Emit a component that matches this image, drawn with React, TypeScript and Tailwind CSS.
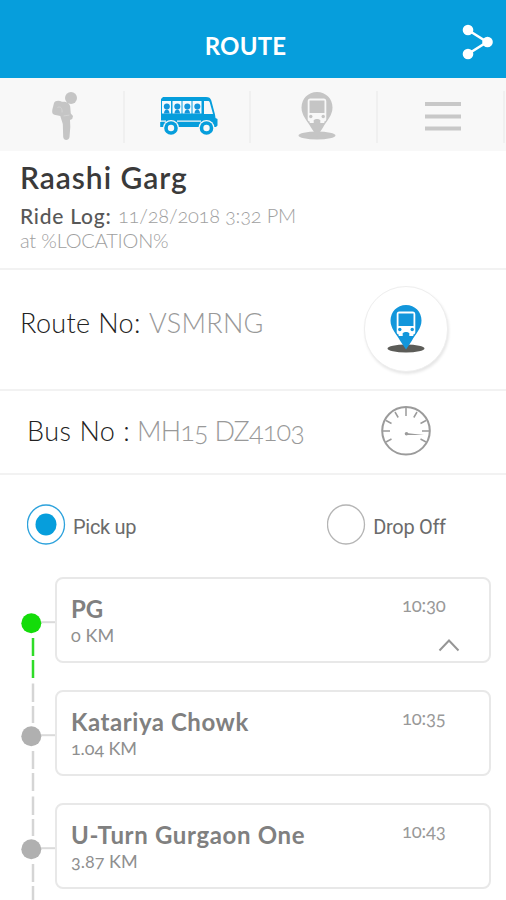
import React, { useState } from "react";

interface Stop {
  name: string;
  distance: string;
  time: string;
  nameClass: string;
  distanceClass: string;
  reached?: boolean;
}

const STOPS: Stop[] = [
  {
    name: "PG",
    distance: "0 KM",
    time: "10:30",
    nameClass: "tracking-[0px]",
    distanceClass: "tracking-[0.1px]",
    reached: true,
  },
  {
    name: "Katariya Chowk",
    distance: "1.04 KM",
    time: "10:35",
    nameClass: "tracking-[0.55px]",
    distanceClass: "tracking-[-0.1px]",
  },
  {
    name: "U-Turn Gurgaon One",
    distance: "3.87 KM",
    time: "10:43",
    nameClass: "tracking-[0.65px]",
    distanceClass: "tracking-[0px]",
  },
];

const ShareIcon: React.FC = () => (
  <svg width="32" height="36" viewBox="0 0 32 36" fill="#fff">
    <path d="M6 6 25 18 6 30" fill="none" stroke="#fff" strokeWidth="2.6" />
    <circle cx="6" cy="6" r="5.3" />
    <circle cx="25.5" cy="18" r="5.3" />
    <circle cx="6" cy="30" r="5.3" />
  </svg>
);

const StudentIcon: React.FC = () => (
  <svg width="28" height="50" viewBox="0 0 28 50" fill="#c5c5c5">
    <circle cx="20" cy="7" r="6" />
    <path d="M3 12c1-2.500 5-3 8-1.200 4-.5 7.500 1 8.200 4.700l.6 7 2.200 2.500-.8 3-2.200 1 .3 7-.8 10c-.5 4-6 4-6.300 0l-.4-13-2.500-8-4.800-1c-3.500-.5-3.700-3-3-6z" />
    <path d="M6.500 16.500c3-1.500 5 .5 4.500 5M12.500 25l6-1" fill="none" stroke="#d4d4d4" strokeWidth="1" />
  </svg>
);

const RiderWindow: React.FC<{ x: number }> = ({ x }) => (
  <g>
    <rect x={x} y="5" width="9" height="12.500" fill="#f5fafd" />
    <circle cx={x + 4.8} cy="10.500" r="3" fill="#1296db" />
    <path d={`M${x + 2} 17.500c0-5.500 5.500-5.500 5.500 0z`} fill="#1296db" />
  </g>
);

const BusIcon: React.FC = () => (
  <svg width="60" height="40" viewBox="0 0 60 40" fill="#069edc">
    <path d="M4 1h43c3 0 4.500 1 5.300 3.500L56 18.500l.5 3.500 2 1v6.500l-1.500 1.500H1.200v-5H2V3z" />
    <RiderWindow x={3} />
    <RiderWindow x={13.500} />
    <RiderWindow x={23.500} />
    <RiderWindow x={33.500} />
    <path d="M45 5h4c1 0 1.500.5 1.800 1.500L54 18h-9z" fill="#f8f8f8" />
    <path d="M1 25.200h6M18 25.200h24" stroke="#f8f8f8" strokeWidth="1.200" />
    <circle cx="12" cy="32" r="8" fill="#f8f8f8" />
    <circle cx="12" cy="32" r="6.800" />
    <circle cx="12" cy="32" r="3.200" fill="#f8f8f8" />
    <circle cx="47.500" cy="32" r="8" fill="#f8f8f8" />
    <circle cx="47.500" cy="32" r="6.800" />
    <circle cx="47.500" cy="32" r="3.200" fill="#f8f8f8" />
  </svg>
);

const StopPinIcon: React.FC<{ pin: string; shade: string; face: string }> = ({
  pin,
  shade,
  face,
}) => (
  <svg width="38" height="48" viewBox="0 0 38 48">
    <ellipse cx="19" cy="43.500" rx="18.500" ry="4" fill={shade} />
    <path
      d="M19 0C10 0 3.500 7 3.500 15.500c0 8 6 13.500 9.500 20l6 9 6-9c3.500-6.500 9.500-12 9.500-20C34.500 7 28 0 19 0z"
      fill={pin}
    />
    <path
      d="M12.500 6.500h13c2 0 2.800 1 2.800 3V27c0 1.500-.8 2.500-2 2.500V31h-4v-3c-1.500-1.500-5-1.500-6.600 0v3h-4v-1.500c-1.200 0-2-1-2-2.500V9.500c0-2 .8-3 2.800-3z"
      fill={face}
    />
    <rect x="11.500" y="8.500" width="15" height="12.500" fill={pin} />
    <circle cx="12.800" cy="24.500" r="1.700" fill={pin} />
    <circle cx="25.200" cy="24.500" r="1.700" fill={pin} />
  </svg>
);

const GaugeIcon: React.FC = () => (
  <svg width="50" height="52" viewBox="0 0 50 52" fill="none" stroke="#9b9b9b">
    <circle cx="25" cy="25.800" r="23.800" strokeWidth="2" />
    <path
      strokeWidth="1.500"
      d="M25 3v8M14 7l3.200 5.500M36 7l-3.200 5.500M5 15.500l5.500 3M45 15.500l-5.500 3M2 26h7M48 26h-7M5 37l5.500-3M45 37l-5.500-3"
    />
    <path d="M25 28 43 30 25 30z" fill="#9b9b9b" stroke="none" />
    <circle cx="25.500" cy="28.800" r="1.800" fill="#9b9b9b" stroke="none" />
  </svg>
);

const Radio: React.FC<{ checked: boolean; onClick: () => void; label: string }> = ({
  checked,
  onClick,
  label,
}) => (
  <button type="button" role="radio" aria-checked={checked} onClick={onClick} className="flex items-center gap-[7px]">
    <svg width="39" height="41" viewBox="0 0 39 41">
      <ellipse
        cx="19"
        cy="20.500"
        rx="18.500"
        ry="19.500"
        fill="none"
        stroke={checked ? "#2da2dc" : "#b5b5b5"}
        strokeWidth="1.300"
      />
      {checked && <ellipse cx="19" cy="20.500" rx="10.500" ry="11" fill="#069edc" />}
    </svg>
    <span className="mt-[4px] text-[20px] tracking-[-0.3px] whitespace-nowrap font-[Roboto,sans-serif] text-[#6b6b6b]">
      {label}
    </span>
  </button>
);

const Rail: React.FC<{ first: boolean; reached?: boolean }> = ({ first, reached }) => {
  const color = reached ? "#14dc0a" : "#b0b0b0";
  return (
    <svg width="55" height="113" viewBox="0 -1 55 113" className="shrink-0">
      {!first && <path d="M33-1v12M33 15v17" stroke="#d5d5d5" strokeWidth="2.500" />}
      <path d="M33 60v18M33 82v18" stroke={reached ? "#2fdc28" : "#d5d5d5"} strokeWidth="2.500" />
      <path d="M33 105.500v7" stroke="#d5d5d5" strokeWidth="2.500" />
      <path d="M40 44.200h15" stroke="#dadada" strokeWidth="2" />
      <circle cx="31.300" cy="45.200" r="10" fill={color} />
    </svg>
  );
};

const StopRow: React.FC<{ stop: Stop; first: boolean }> = ({ stop, first }) => (
  <li className="flex h-[113px]">
    <Rail first={first} reached={stop.reached} />
    <div className="flex h-[86px] w-[436px] justify-between rounded-[8px] border-2 border-[#e8e8e8] pr-[27px] pl-[14px]">
      <div className="pt-[15px]">
        <h2 className={`text-[24px] leading-[30px] font-bold text-[#808080] ${stop.nameClass}`}>{stop.name}</h2>
        <p className={`text-[18px] leading-[22px] text-[#8f8f8f] ${stop.distanceClass}`}>{stop.distance}</p>
      </div>
      <div className="flex w-[60px] flex-col pt-[14px]">
        <span className="text-[18.500px] leading-[24px] tracking-[-0.2px] text-[#999]">{stop.time}</span>
        {stop.reached && (
          <svg width="22" height="14" viewBox="0 0 22 14" className="mt-[21px] ml-[36px]">
            <path d="M1.500 12.500 11 2.500l9.500 10" fill="none" stroke="#969696" strokeWidth="2" />
          </svg>
        )}
      </div>
    </div>
  </li>
);

const App: React.FC = () => {
  const [trip, setTrip] = useState("pickup");

  return (
    <main className="h-[900px] w-[506px] overflow-hidden bg-white font-[Lato,sans-serif] [font-feature-settings:'onum']">
      <header className="flex h-[78px] items-center justify-between bg-[#069edc] pr-[12px]">
        <span className="w-[29px]" />
        <h1 className="mt-[13px] text-[24px] font-bold tracking-[0.2px] text-white">ROUTE</h1>
        <button type="button" aria-label="Share" className="mt-[6px]">
          <ShareIcon />
        </button>
      </header>

      <nav className="grid h-[73px] grid-cols-[125px_126px_127px_127px] bg-[#f8f8f8]">
        <div className="my-[13px] flex items-center justify-center border-r-2 border-[#f0f0f0] pb-[2px] pl-[6px]">
          <StudentIcon />
        </div>
        <div className="my-[13px] flex items-center justify-center border-r-2 border-[#f0f0f0] pb-[2px] pl-[4px]">
          <BusIcon />
        </div>
        <div className="my-[13px] flex items-center justify-center border-r-2 border-[#f0f0f0] pb-[2px] pl-[6px]">
          <StopPinIcon pin="#c5c5c5" shade="#c5c5c5" face="#f8f8f8" />
        </div>
        <div className="my-[13px] flex items-center justify-center border-r-2 border-[#f0f0f0] pb-[2px] pl-[4px]">
          <svg width="36" height="30" viewBox="0 0 36 30">
            <path d="M0 3h36M0 15.500h36M0 27.500h36" stroke="#c8c8c8" strokeWidth="3.800" />
          </svg>
        </div>
      </nav>

      <section className="h-[119px] border-b-2 border-[#f2f2f2] pt-[8px] pl-[20px]">
        <h2 className="text-[30px] leading-[36px] font-semibold tracking-[0.95px] text-[#3a3a3a]">Raashi Garg</h2>
        <p className="mt-[8px] flex text-[20px] leading-[25px] text-[#a0a0a0]">
          <span className="w-[98px] text-[21px] font-medium tracking-[0.75px] text-[#585858]">Ride Log:</span>
          <span className="font-light tracking-[-0.2px]">11/28/2018 3:32 PM</span>
        </p>
        <p className="text-[20px] leading-[25px] font-light tracking-[-0.2px] text-[#a0a0a0]">at %LOCATION%</p>
      </section>

      <section className="flex h-[121px] items-center justify-between border-b-2 border-[#f2f2f2] pr-[58px] pb-[2px] pl-[20px]">
        <p className="mb-[10px] flex text-[27px] text-[#999]">
          <span className="w-[129px] font-light tracking-[0.35px] text-[#222]">Route No:</span>
          <span className="font-light tracking-[0.3px]">VSMRNG</span>
        </p>
        <div className="flex h-[86px] w-[84px] items-center justify-center rounded-full border border-[#eee] bg-white shadow-[1px_2px_3px_rgba(0,0,0,0.1)]">
          <StopPinIcon pin="#1296db" shade="#5c5c58" face="#fff" />
        </div>
      </section>

      <section className="flex h-[84px] items-center justify-between border-b-2 border-[#f2f2f2] pr-[75px] pb-[2px] pl-[27px]">
        <p className="flex text-[27px] text-[#999]">
          <span className="w-[110px] font-light tracking-[0.5px] text-[#222]">Bus No :</span>
          <span className="font-light tracking-[-0.8px]">MH15 DZ4103</span>
        </p>
        <GaugeIcon />
      </section>

      <div role="radiogroup" aria-label="Trip" className="flex h-[102px] gap-[191px] pb-[3px] pl-[27px]">
        <Radio checked={trip === "pickup"} onClick={() => setTrip("pickup")} label="Pick up" />
        <Radio checked={trip === "dropoff"} onClick={() => setTrip("dropoff")} label="Drop Off" />
      </div>

      <ul>
        {STOPS.map((stop, i) => (
          <StopRow key={stop.name} stop={stop} first={i === 0} />
        ))}
      </ul>
    </main>
  );
};

export default App;
